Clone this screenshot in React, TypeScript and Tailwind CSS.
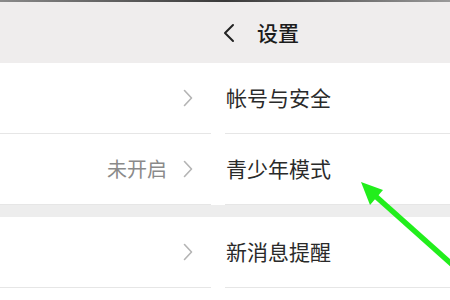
const font = { fontFamily: '"Noto Sans CJK SC", "Noto Sans", sans-serif' };

function Chevron() {
  return (
    <svg width="10" height="18" viewBox="0 0 10 18" fill="none">
      <path d="M1.5 1.5 L8.5 9 L1.5 16.5" stroke="#b4b4b4" strokeWidth="1.6" strokeLinecap="round" strokeLinejoin="round" />
    </svg>
  );
}

function Row({ label, value }: { label: string; value?: string }) {
  return (
    <div className="flex h-[71px] bg-white">
      <div className="flex w-[211px] items-center justify-end gap-[16px] border-b border-[#e6e6e6] pr-[18px]">
        {value && <span className="text-[20px] text-[#8a8a8a]">{value}</span>}
        <Chevron />
      </div>
      <div className="w-[14px]" />
      <div className="flex flex-1 items-center border-b border-[#e6e6e6] pl-[1px]">
        <span className="text-[21px] text-[#2a2a2a]">{label}</span>
      </div>
    </div>
  );
}

export default function App() {
  return (
    <div className="relative h-[300px] w-[450px] overflow-hidden bg-white" style={font}>
      <div className="h-[2px] bg-gradient-to-r from-[#8a8a8a] via-[#3a3a3a] to-[#9a9a9a]" />
      <div className="flex h-[61px] items-center bg-[#efeded]">
        <div className="w-[222px]" />
        <svg width="14" height="20" viewBox="0 0 14 20" fill="none">
          <path d="M11 2 L3 10 L11 18" stroke="#222" strokeWidth="2" strokeLinecap="round" strokeLinejoin="round" />
        </svg>
        <span className="ml-[21px] text-[21px] font-medium text-[#1c1c1c]">设置</span>
      </div>
      <Row label="帐号与安全" />
      <Row label="青少年模式" value="未开启" />
      <div className="h-[12px] bg-[#ededed]" />
      <Row label="新消息提醒" />

      <svg className="absolute left-0 top-0" width="450" height="300" viewBox="0 0 450 300">
        <line x1="372" y1="193" x2="456" y2="268" stroke="#22ee1c" strokeWidth="5.5" />
        <polygon points="361,182 383,190 370,205" fill="#22ee1c" />
      </svg>
    </div>
  );
}
